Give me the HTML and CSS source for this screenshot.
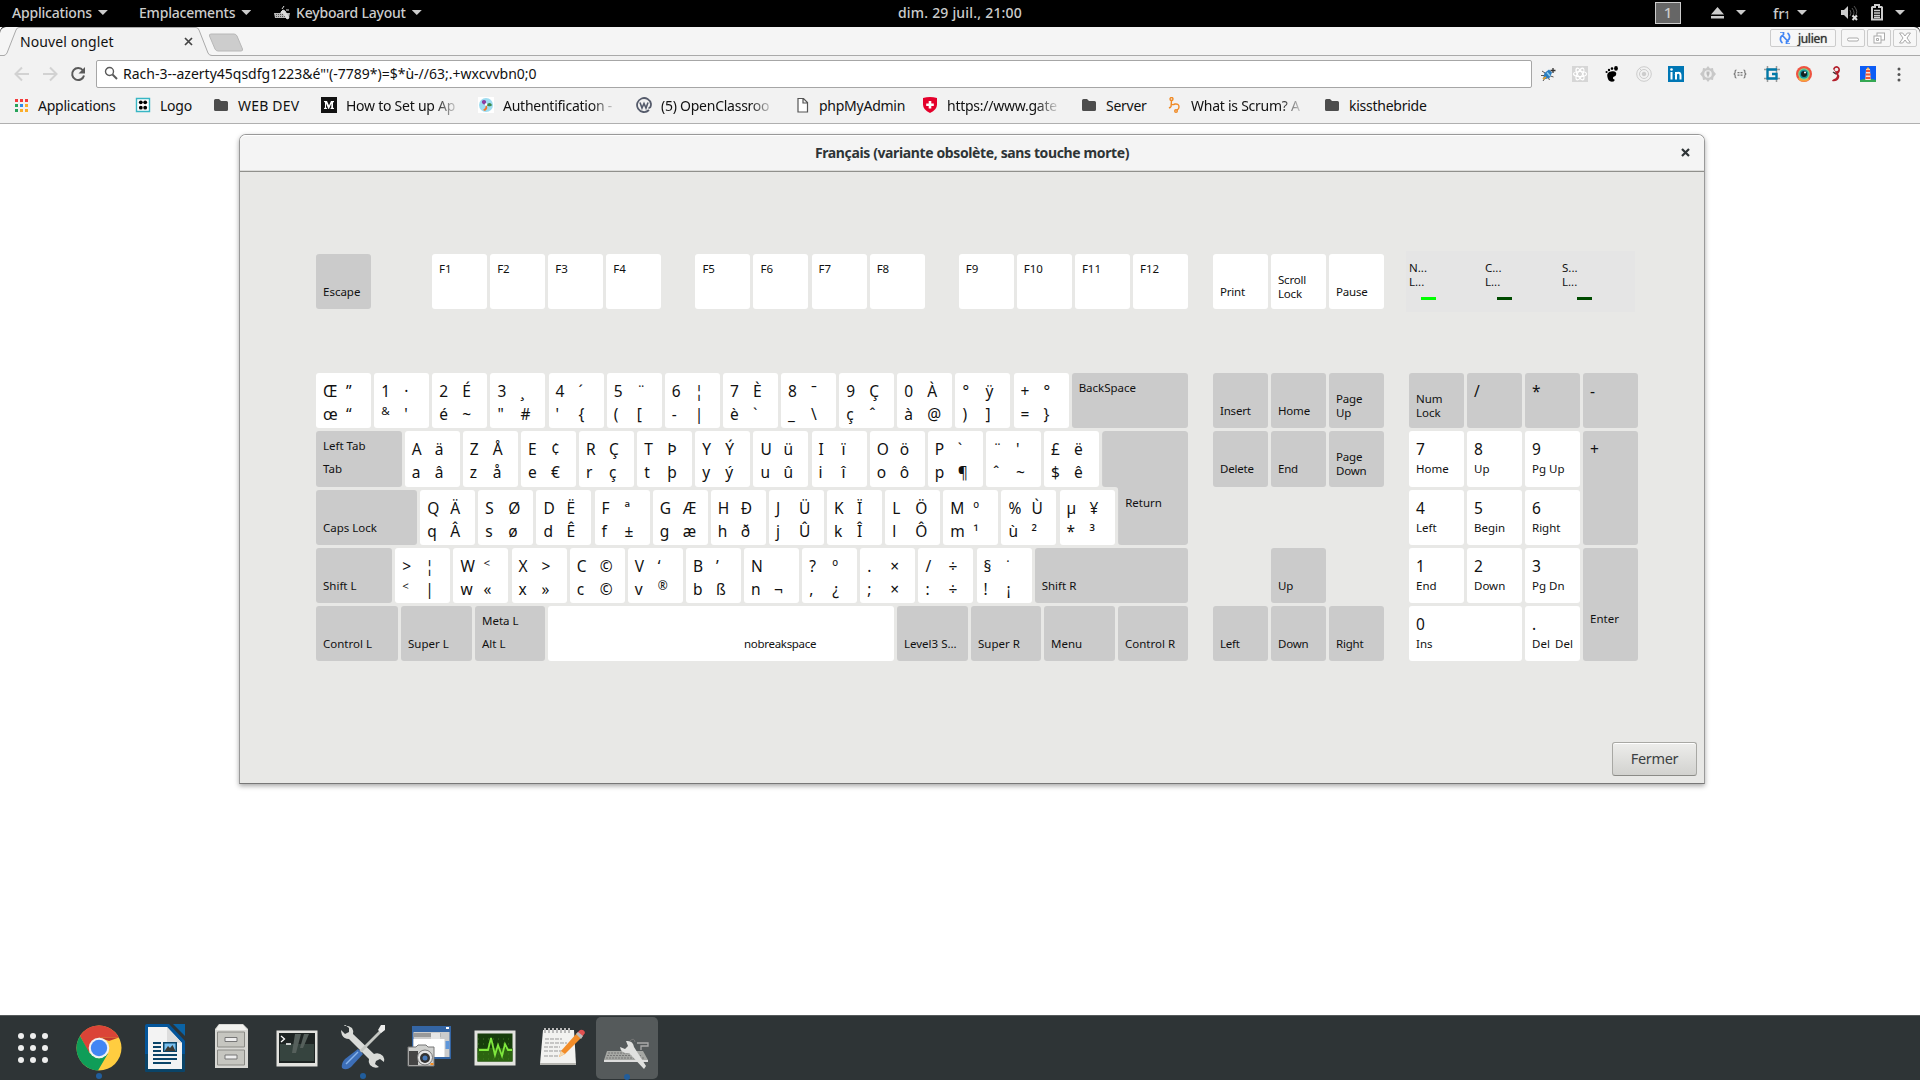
FILE: index.html
```html
<!DOCTYPE html>
<html lang="fr">
<head>
<meta charset="utf-8">
<title>Keyboard Layout</title>
<link rel="stylesheet" href="styles.css">
</head>
<body>
<header class="panel">
  <nav class="panel-side">
    <span class="menu m-apps"><span>Applications</span><b class="caret"></b></span>
    <span class="menu m-places"><span>Emplacements</span><b class="caret"></b></span>
    <span class="menu m-kbd"><svg width="16" height="14" viewBox="0 0 16 14"><path d="M0 7h16l-1 5H1z" fill="#bbb"/><path d="M2 8.500h11M2 10.500h10" stroke="#555" stroke-dasharray="1 1"/><path d="M7 6l2-2 2 1 4 7-2 1-4-6-2 0zM8 3l2-3M12 4h3" stroke="#ddd" fill="#ddd"/></svg><span>Keyboard Layout</span><b class="caret"></b></span>
  </nav>
  <span class="clock">dim. 29 juil., 21:00</span>
  <div class="panel-side status">
    <span class="workspace">1</span>
    <svg class="eject" width="13" height="12" viewBox="0 0 13 12" fill="#ccc"><path d="M6.500 0L13 7.500H0zM0 9h13v2.500H0z"/></svg>
    <b class="caret c-eject"></b>
    <span class="lang">fr<small>1</small></span><b class="caret c-lang"></b>
    <svg class="volume" width="17" height="16" viewBox="0 0 17 16"><path d="M0 5h3l4-4v13l-4-4H0z" fill="#ccc"/><path d="M9 5q2 3 0 6M11 3q4 5 0 9M13 1q5 6 1 10" fill="none" stroke="#555"/><path d="M11.500 10.500l4.500 4.500m0-4.500l-4.500 4.500" stroke="#ddd" stroke-width="2"/></svg>
    <svg class="battery" width="12" height="17" viewBox="0 0 12 17"><path d="M4 1h4v2h2.500l.5.5v12H1V3.500L1.500 3H4z" fill="none" stroke="#ccc" stroke-width="2"/><path d="M3 6.500h6M3 9h6M3 11.500h6M3 13.500h6" stroke="#ccc" stroke-width="1.300"/></svg>
    <b class="caret"></b>
  </div>
</header>

<div class="tabstrip">
  <svg class="tab-shape" width="250" height="29" viewBox="0 0 250 29"><path d="M0 28.500H4Q6 28 7 26L16 3Q17 .5 19 .5H196Q198 .5 199 3L208 26Q209 28.500 212 28.500H250V30H0z" fill="#f2f2f2"/><path d="M0 28.500H4Q6 28 7 26L16 3Q17 .5 19 .5H196Q198 .5 199 3L208 26Q209 28.500 212 28.500H250" fill="none" stroke="#aaa"/><path d="M211 7h23q2 0 3 2l5.500 13q.5 2-1.500 2h-23q-2 0-3-2l-5.500-13q-.5-2 1.500-2z" fill="#cdcdcd" stroke="#b8b8b8"/></svg>
  <span class="tab-title">Nouvel onglet</span>
  <svg class="tab-close" width="9" height="9" viewBox="0 0 9 9"><path d="M1 1l7 7M8 1L1 8" stroke="#444" stroke-width="1.700"/></svg>
  <div class="win-controls">
    <span class="user"><svg width="12" height="12" viewBox="0 0 12 12" fill="none" stroke="#4285f4" stroke-width="1.700"><path d="M1 0h3.500v3M4.500 3Q1 4 1.500 8q.5 2 2 3M11 12H7.500V9M7.500 9Q11 8 10.500 4q-.5-2-2-3M3 3l6.500 7"/></svg><span>julien</span></span>
    <span class="wc"><svg width="14" height="12" viewBox="0 0 14 12"><rect x="1.500" y="6" width="11" height="3" rx="1.500" fill="#fff" stroke="#aaa"/></svg></span>
    <span class="wc"><svg width="14" height="12" viewBox="0 0 14 12" fill="#fff" stroke="#aaa"><rect x="5" y="1" width="7.500" height="7"/><rect x="2" y="4" width="7" height="7"/><path d="M4.500 6.500h2v2h-2z"/></svg></span>
    <span class="wc"><svg width="14" height="12" viewBox="0 0 14 12"><path d="M1.500 1h3.200L7 4l2.300-3h3.200L9 6l3.500 5H9.300L7 8l-2.300 3H1.500L5 6z" fill="#fff" stroke="#aaa"/></svg></span>
  </div>
</div>

<div class="toolbar">
  <div class="nav-row">
    <div class="nav-buttons">
      <svg width="16" height="16" viewBox="0 0 16 16" fill="none" stroke="#d2d2d2" stroke-width="2"><path d="M15 8H2M8 1.500L1.500 8 8 14.500"/></svg>
      <svg width="16" height="16" viewBox="0 0 16 16" fill="none" stroke="#d2d2d2" stroke-width="2"><path d="M1 8h13M8 1.500L14.500 8 8 14.500"/></svg>
      <svg width="16" height="16" viewBox="0 0 16 16"><path d="M13 4.500A6 6 0 1 0 14 9.500" fill="none" stroke="#5a5a5a" stroke-width="2"/><path d="M15 1v6.500H8.500z" fill="#5a5a5a"/></svg>
    </div>
    <div class="omnibox"><svg width="14" height="14" viewBox="0 0 14 14" fill="none" stroke="#5a5a5a"><circle cx="5.500" cy="5.500" r="4" stroke-width="1.400"/><path d="M8.500 8.500l4.500 4.500" stroke-width="2"/></svg><span>Rach-3--azerty45qsdfg1223&amp;é"'(-7789*)=$*ù-//63;.+wxcvvbn0;0</span></div>
    <div class="extensions">
      <svg viewBox="0 0 16 16"><path d="M3 13L4.500 7 9 3.500l3 3-2 5-4 1.500z" fill="#2b7dc0"/><path d="M2 5l3 2M1 9.500h3M3 15l2-3M9.500 14l-1-2M13.500 11l-3-1" stroke="#555"/><path d="M13 2v5M10.500 4.500h5" stroke="#333" stroke-width="1.300"/><path d="M7 6.500l3 3.500" stroke="#8fd0f0" stroke-width="1.500"/><path d="M3 13l3-2" stroke="#e0a030" stroke-width="2"/></svg>
      <svg viewBox="0 0 16 16"><path d="M0 0h16v16H0z" fill="#d6d6d6"/><g fill="none" stroke="#fff" stroke-width="1.200"><ellipse cx="8" cy="8" rx="6.500" ry="2.500"/><ellipse cx="8" cy="8" rx="6.500" ry="2.500" transform="rotate(60 8 8)"/><ellipse cx="8" cy="8" rx="6.500" ry="2.500" transform="rotate(120 8 8)"/></g></svg>
      <svg viewBox="0 0 16 16"><path d="M7 5.500c4-1 6 .5 5 3.500-.5 2-3 1-3 3s2 .5 1.500 2.500C9.500 16.500 5 16 4 13 2.500 9 3 6.500 7 5.500z"/><ellipse cx="12" cy="2.400" rx="1.900" ry="2.300"/><circle cx="8" cy="2.600" r="1.300"/><circle cx="5" cy="4" r="1.200"/><circle cx="2.600" cy="6" r="1.100"/></svg>
      <svg viewBox="0 0 16 16" fill="none" stroke="#ccc"><circle cx="8" cy="8" r="7.300"/><circle cx="8" cy="8" r="4.500"/><circle cx="8" cy="8" r="1.800" fill="#ccc"/><path d="M3 2l3 3"/></svg>
      <svg viewBox="0 0 16 16"><path d="M0 0h16v16H0z" fill="#0077b5"/><path d="M3.500 6v7.500M8 6v7.500M7.500 9q1-2.500 3-2.200 2 .2 2 2.700v4" fill="none" stroke="#fff" stroke-width="2"/><circle cx="3.500" cy="3.500" r="1.300" fill="#fff"/></svg>
      <svg viewBox="0 0 16 16"><path d="M8 0l2 2.500 3-.5.500 3L16 8l-2.500 3-.500 3-3-.500L8 16l-2-2.500-3 .500-.500-3L0 8l2.500-3L3 2l3 .500z" fill="#c8c8c8"/><circle cx="8" cy="8" r="3.800" fill="#eee"/><path d="M6.500 5.500h3V8L8 11.500 6.500 8z" fill="#bbb"/></svg>
      <svg viewBox="0 0 16 16" fill="none" stroke="#777" stroke-width="1.200"><path d="M4.500 4Q2.800 4 3.200 6 3.300 7.800 1.700 8q1.600.2 1.500 2Q2.800 12 4.500 12M11.500 4q1.700 0 1.300 2-.1 1.800 1.500 2-1.600.2-1.500 2 .4 2-1.300 2M5.500 6.700h2M8.500 6.700h2M5.500 9.200h2M8.500 9.200h2"/></svg>
      <svg viewBox="0 0 16 16" fill="none"><path d="M0 3.500h16M0 12.500h16M3.500 0v16M12.500 0v16" stroke="#999" stroke-width="1.500"/><path d="M13 3.500H3.500v9h9V8H8" stroke="#0079a8" stroke-width="2.300"/></svg>
      <svg viewBox="0 0 16 16"><circle cx="8" cy="8" r="8" fill="#ef5340"/><path d="M13 14A8 8 0 0 1 2 13l3-4h6z" fill="#f7a13b"/><circle cx="8" cy="8" r="5.800" fill="#7dd88c"/><circle cx="8" cy="8" r="4.500" fill="#1896a0"/><circle cx="8" cy="8" r="3" fill="#122"/><circle cx="9" cy="6.500" r="1" fill="#fff"/></svg>
      <svg viewBox="0 0 16 16"><path d="M5 3q1-3 4-3 3 1 3 4 0 2-2 4 2 1 1 4-2 4-7 3 0-1 2-2 3-1 3-4-3-1-4-3l3 .500z" fill="#b3202c"/><circle cx="8.500" cy="3.500" r="1.800" fill="#eee"/><path d="M5 6l3 2" stroke="#444" stroke-width="1.500"/></svg>
      <svg viewBox="0 0 16 16"><path d="M0 0h16v16H0z" fill="#0c5cf5"/><path d="M0 14q8-2.500 16 0v2H0z" fill="#35a853"/><path d="M6 3h4l.7 11H5.300z" fill="#fbe3d3"/><path d="M6 5h4M5.600 8.500h5M5.500 12h5" stroke="#ee5533" stroke-width="2"/><path d="M6 3.500L8 1l2 2.500z" fill="#ffb64d"/></svg>
      <svg class="more" viewBox="0 0 16 16" fill="#555"><circle cx="8" cy="3" r="1.500"/><circle cx="8" cy="8.500" r="1.500"/><circle cx="8" cy="14" r="1.500"/></svg>
    </div>
  </div>
  <div class="bookmarks">
    <span class="bm"><svg viewBox="0 0 16 16"><path d="M2 2h3v3H2zM7 2h3v3H7zM12 2h3v3h-3z" fill="#f33b3b"/><path d="M2 7h3v3H2zM2 12h3v3H2z" fill="#27a35a"/><path d="M7 7h3v3H7z" fill="#2f8bea"/><path d="M12 7h3v3h-3zM7 12h3v3H7zM12 12h3v3h-3z" fill="#fbae2b"/></svg><span>Applications</span></span>
    <span class="bm"><svg viewBox="0 0 16 16"><path d="M1.500 1.500h13v13h-13z" fill="#fff" stroke="#38b6c4" stroke-width="1.400"/><g><circle cx="5.800" cy="5.300" r="1.900"/><circle cx="10.200" cy="5.300" r="1.900"/><circle cx="5.800" cy="10.700" r="1.900"/><circle cx="10.200" cy="10.700" r="1.900"/></g></svg><span>Logo</span></span>
    <span class="bm"><svg viewBox="0 0 16 16"><path d="M1 3.500Q1 2 2.500 2H6l2 2h5.500Q15 4 15 5.500v7q0 1.500-1.500 1.500h-11Q1 14 1 12.500z" fill="#4d4d4d"/></svg><span>WEB DEV</span></span>
    <span class="bm"><svg viewBox="0 0 16 16"><path d="M0 0h16v16H0z" fill="#121212"/><path d="M3 4h3l2 4.500L10 4h3v1l-1 .6v5l1 .6v.8H9.500v-.8l.8-.6V6.500L8 12h-.6L5 6.500v4l1.200.9v.6H3v-.7l1-.9V5.600L3 4.700z" fill="#fff"/></svg><span class="fade">How to Set up Ap</span></span>
    <span class="bm"><svg viewBox="0 0 16 16"><path d="M0 0h16v16H0z" fill="#fff"/><circle cx="8" cy="8" r="7" fill="#9edcf0"/><path d="M8 8q-5-1-4-4 2-2 4 0z" fill="#8b3fa0"/><path d="M8 8q4-4 6 0-1 2-4 1z" fill="#3a8a4a"/><path d="M8 8q3 3-1 6l-2-1q3-2 3-5z" fill="#f07828"/><circle cx="8" cy="7.500" r="1.300" fill="#fff"/></svg><span class="fade">Authentification -</span></span>
    <span class="bm"><svg viewBox="0 0 16 16" fill="none" stroke="#555b6b" stroke-width="1.800"><path d="M13 13A7 7 0 1 1 15 7q0 4-2.500 4"/><path d="M4 5.500l2 5.500 2-4.500 2 4.500 2-5.500" stroke-width="1.600"/></svg><span class="fade">(5) OpenClassroo</span></span>
    <span class="bm"><svg viewBox="0 0 16 16"><path d="M4 1.500h5.500L13.500 5.500v9.500H4zM9 1.500v4.500h4.500" fill="#fff" stroke="#555" stroke-width="1.200"/></svg><span>phpMyAdmin</span></span>
    <span class="bm"><svg viewBox="0 0 16 16"><path d="M1 1q3.500-1 7-1t7 1v6.500Q15 13 8 16 1 13 1 7.500z" fill="#e4002b"/><path d="M8 4v7.500M4.200 7.700h7.600" stroke="#fff" stroke-width="2.600"/></svg><span class="fade">https://www.gate</span></span>
    <span class="bm"><svg viewBox="0 0 16 16"><path d="M1 3.500Q1 2 2.500 2H6l2 2h5.500Q15 4 15 5.500v7q0 1.500-1.500 1.500h-11Q1 14 1 12.500z" fill="#4d4d4d"/></svg><span>Server</span></span>
    <span class="bm"><svg viewBox="0 0 16 16" fill="none" stroke="#f08a24" stroke-width="1.400"><circle cx="5.500" cy="2" r="1.500"/><path d="M5.500 3.500L5 10M5 6.500q1 2 4 .5 4-.5 4 3 0 2-2 3M3 11l2-1"/><circle cx="10" cy="14" r="1.300"/></svg><span class="fade">What is Scrum? A</span></span>
    <span class="bm"><svg viewBox="0 0 16 16"><path d="M1 3.500Q1 2 2.500 2H6l2 2h5.500Q15 4 15 5.500v7q0 1.500-1.500 1.500h-11Q1 14 1 12.500z" fill="#4d4d4d"/></svg><span>kissthebride</span></span>
  </div>
</div>

<main class="desktop">
  <section class="dialog">
    <div class="titlebar"><span></span><h1>Français (variante obsolète, sans touche morte)</h1><svg width="9" height="9" viewBox="0 0 9 9"><path d="M1 1l7 7M8 1L1 8" stroke="#2e3436" stroke-width="2.200"/></svg></div>
    <div class="board">
      <div class="deck">
        <div class="block main frow">
          <div class="key mod"><u></u><s>Escape</s></div>
          <div class="fgroup"><div class="key"><s>F1</s></div><div class="key"><s>F2</s></div><div class="key"><s>F3</s></div><div class="key"><s>F4</s></div></div>
          <div class="fgroup"><div class="key"><s>F5</s></div><div class="key"><s>F6</s></div><div class="key"><s>F7</s></div><div class="key"><s>F8</s></div></div>
          <div class="fgroup"><div class="key"><s>F9</s></div><div class="key"><s>F10</s></div><div class="key"><s>F11</s></div><div class="key"><s>F12</s></div></div>
        </div>
        <div class="block nav one">
          <div class="key n"><u></u><s>Print</s></div><div class="key n two"><s>Scroll<br>Lock</s></div><div class="key n"><u></u><s>Pause</s></div>
        </div>
        <div class="leds">
          <div class="led on"><span>N...<br>L...</span><b></b></div>
          <div class="led"><span>C...<br>L...</span><b></b></div>
          <div class="led last"><span>S...<br>L...</span><b></b></div>
        </div>
      </div>

      <div class="deck">
        <div class="block main rows">
          <div class="row">
            <div class="key"><i>Œ</i><i>”</i><i>œ</i><i>“</i></div>
            <div class="key"><i>1</i><i>·</i><s>&amp;</s><i>'</i></div>
            <div class="key"><i>2</i><i>É</i><i>é</i><i>~</i></div>
            <div class="key"><i>3</i><i>¸</i><i>"</i><i>#</i></div>
            <div class="key"><i>4</i><i>´</i><i>'</i><i>{</i></div>
            <div class="key"><i>5</i><i>¨</i><i>(</i><i>[</i></div>
            <div class="key"><i>6</i><i>¦</i><i>-</i><i>|</i></div>
            <div class="key"><i>7</i><i>È</i><i>è</i><i>`</i></div>
            <div class="key"><i>8</i><i>ˉ</i><i>_</i><i>\</i></div>
            <div class="key"><i>9</i><i>Ç</i><i>ç</i><i>ˆ</i></div>
            <div class="key"><i>0</i><i>À</i><i>à</i><i>@</i></div>
            <div class="key"><i>°</i><i>ÿ</i><i>)</i><i>]</i></div>
            <div class="key"><i>+</i><i>°</i><i>=</i><i>}</i></div>
            <div class="key mod fill"><s>BackSpace</s></div>
          </div>
          <div class="row tall">
            <div class="key mod k-tab"><s>Left Tab</s><s>Tab</s></div>
            <div class="key"><i>A</i><i>ä</i><i>a</i><i>â</i></div>
            <div class="key"><i>Z</i><i>Å</i><i>z</i><i>å</i></div>
            <div class="key"><i>E</i><i>¢</i><i>e</i><i>€</i></div>
            <div class="key"><i>R</i><i>Ç</i><i>r</i><i>ç</i></div>
            <div class="key"><i>T</i><i>Þ</i><i>t</i><i>þ</i></div>
            <div class="key"><i>Y</i><i>Ý</i><i>y</i><i>ý</i></div>
            <div class="key"><i>U</i><i>ü</i><i>u</i><i>û</i></div>
            <div class="key"><i>I</i><i>ï</i><i>i</i><i>î</i></div>
            <div class="key"><i>O</i><i>ö</i><i>o</i><i>ô</i></div>
            <div class="key"><i>P</i><i>`</i><i>p</i><i>¶</i></div>
            <div class="key"><i>¨</i><i>'</i><i>ˆ</i><i>~</i></div>
            <div class="key"><i>£</i><i>ë</i><i>$</i><i>ê</i></div>
            <div class="key mod k-return"><s>Return</s></div>
          </div>
          <div class="row">
            <div class="key mod k-caps"><u></u><s>Caps Lock</s></div>
            <div class="key"><i>Q</i><i>Ä</i><i>q</i><i>Â</i></div>
            <div class="key"><i>S</i><i>Ø</i><i>s</i><i>ø</i></div>
            <div class="key"><i>D</i><i>Ë</i><i>d</i><i>Ê</i></div>
            <div class="key"><i>F</i><i>ª</i><i>f</i><i>±</i></div>
            <div class="key"><i>G</i><i>Æ</i><i>g</i><i>æ</i></div>
            <div class="key"><i>H</i><i>Ð</i><i>h</i><i>ð</i></div>
            <div class="key"><i>J</i><i>Ü</i><i>j</i><i>Û</i></div>
            <div class="key"><i>K</i><i>Ï</i><i>k</i><i>Î</i></div>
            <div class="key"><i>L</i><i>Ö</i><i>l</i><i>Ô</i></div>
            <div class="key"><i>M</i><i>º</i><i>m</i><i>¹</i></div>
            <div class="key"><i>%</i><i>Ù</i><i>ù</i><i>²</i></div>
            <div class="key"><i>µ</i><i>¥</i><i>*</i><i>³</i></div>
          </div>
          <div class="row">
            <div class="key mod k-shift"><u></u><s>Shift L</s></div>
            <div class="key"><i>&gt;</i><i>¦</i><s>&lt;</s><i>|</i></div>
            <div class="key"><i>W</i><s>&lt;</s><i>w</i><i>«</i></div>
            <div class="key"><i>X</i><i>&gt;</i><i>x</i><i>»</i></div>
            <div class="key"><i>C</i><i>©</i><i>c</i><i>©</i></div>
            <div class="key"><i>V</i><i>‘</i><i>v</i><i class="reg">®</i></div>
            <div class="key"><i>B</i><i>’</i><i>b</i><i>ß</i></div>
            <div class="key"><i>N</i><i></i><i>n</i><i>¬</i></div>
            <div class="key"><i>?</i><i>º</i><i>,</i><i>¿</i></div>
            <div class="key"><i>.</i><i>×</i><i>;</i><i>×</i></div>
            <div class="key"><i>/</i><i>÷</i><i>:</i><i>÷</i></div>
            <div class="key"><i>§</i><i>˙</i><i>!</i><i>¡</i></div>
            <div class="key mod fill"><u></u><s>Shift R</s></div>
          </div>
          <div class="row bottom">
            <div class="key mod"><u></u><s>Control L</s></div>
            <div class="key mod"><u></u><s>Super L</s></div>
            <div class="key mod"><s>Meta L</s><s>Alt L</s></div>
            <div class="key space"><u></u><s>nobreakspace</s></div>
            <div class="key mod"><u></u><s>Level3 S...</s></div>
            <div class="key mod"><u></u><s>Super R</s></div>
            <div class="key mod"><u></u><s>Menu</s></div>
            <div class="key mod"><u></u><s>Control R</s></div>
          </div>
        </div>

        <div class="block nav">
          <div class="key mod"><u></u><s>Insert</s></div><div class="key mod"><u></u><s>Home</s></div><div class="key mod two"><s>Page<br>Up</s></div>
          <div class="key mod"><u></u><s>Delete</s></div><div class="key mod"><u></u><s>End</s></div><div class="key mod two"><s>Page<br>Down</s></div>
          <div class="key mod k-up"><u></u><s>Up</s></div>
          <div class="key mod k-left"><u></u><s>Left</s></div><div class="key mod k-down"><u></u><s>Down</s></div><div class="key mod k-right"><u></u><s>Right</s></div>
        </div>

        <div class="block numpad">
          <div class="key mod two"><s>Num<br>Lock</s></div><div class="key mod"><i>/</i></div><div class="key mod"><i>*</i></div><div class="key mod"><i>-</i></div>
          <div class="key n"><i>7</i><s>Home</s></div><div class="key n"><i>8</i><s>Up</s></div><div class="key n"><i>9</i><s>Pg Up</s></div><div class="key mod v2"><i>+</i></div>
          <div class="key n"><i>4</i><s>Left</s></div><div class="key n"><i>5</i><s>Begin</s></div><div class="key n"><i>6</i><s>Right</s></div>
          <div class="key n"><i>1</i><s>End</s></div><div class="key n"><i>2</i><s>Down</s></div><div class="key n"><i>3</i><s>Pg Dn</s></div><div class="key mod v2 k-enter"><s>Enter</s></div>
          <div class="key n h2"><i>0</i><s>Ins</s></div><div class="key n del"><i>.</i><i></i><s>Del</s><s>Del</s></div>
        </div>
      </div>
    </div>
    <div class="actions"><button>Fermer</button></div>
  </section>
</main>

<footer class="dock">
  <div class="app"><svg viewBox="0 0 48 48" fill="#eee"><circle cx="12" cy="12" r="3"/><circle cx="24" cy="12" r="3"/><circle cx="36" cy="12" r="3"/><circle cx="12" cy="24" r="3"/><circle cx="24" cy="24" r="3"/><circle cx="36" cy="24" r="3"/><circle cx="12" cy="36" r="3"/><circle cx="24" cy="36" r="3"/><circle cx="36" cy="36" r="3"/></svg></div>
  <div class="app running"><svg viewBox="0 0 48 48"><circle cx="24" cy="24" r="22.500" fill="#ffcd40"/><path d="M24 13.500H43.900A22.500 22.500 0 0 0 5 12L14 29z" fill="#db4437"/><path d="M5 12A22.500 22.500 0 0 0 23 46.500L33 29.500 24 34.500 14.500 29z" fill="#0f9d58"/><path d="M24 13.500H43.900L34 17z" fill="#c23a2e"/><circle cx="24" cy="24" r="10.300" fill="#f1f1f1"/><circle cx="24" cy="24" r="8.200" fill="#4285f4"/></svg></div>
  <div class="app"><svg viewBox="0 0 48 48"><path d="M6 0H28L44 17V46q0 2-2 2H6q-2 0-2-2V2q0-2 2-2z" fill="#04559a"/><path d="M4 30v16q0 2 2 2h36q2 0 2-2V30z" fill="#0a4468"/><path d="M32 0h12v12z" fill="#0b63a5"/><path d="M7 3H26L41 19V45H7z" fill="#f3f3f3"/><path d="M26 3v16h15z" fill="#ddd"/><path d="M12 19h8M12 23h8M12 27h8M12 31h24M12 35h24M12 39h18" stroke="#0a4468" stroke-width="2"/><path d="M22 18h14v10H22z" fill="#0a4468"/><path d="M23.500 19.500h11V27h-11z" fill="#7ac0ef"/><path d="M23.500 27l3.500-5 2 2 2.500-3 3 6z" fill="#3d3a33"/></svg></div>
  <div class="app"><svg viewBox="0 0 48 48"><path d="M12 0h24l5 5v39H8V5z" fill="#d8d8d4"/><path d="M12 1h24l4 5H9z" fill="#f2f2ef"/><path d="M10.500 8h27v15h-27zM10.500 26h27v15h-27z" fill="#c6c6c0" stroke="#8a8a85"/><path d="M18 13.500h12v4H18zM18 31h12v4H18z" fill="#eee" stroke="#777"/></svg></div>
  <div class="app"><svg viewBox="0 0 48 48"><path d="M3.500 6.500h41v36h-41z" fill="#e3e3df"/><path d="M6 9h36v30H6z" fill="#1e2423"/><path d="M7 20h34v17H7z" fill="#36443f"/><path d="M22 10h6l-5 19h-4zM31 10h5l-6 14h-3z" fill="#56605c"/><path d="M8 12l3.500 3L8 18M13 20h5" fill="none" stroke="#fff" stroke-width="1.300"/></svg></div>
  <div class="app running"><svg viewBox="0 0 48 48"><path d="M3 4l2-2q4-1 8 2 2 3 1 6l21 20q5-2 9 2 2 3 1 6l-4-3-4 2-1 3 4 3q-5 2-9-2-2-3-1-6L10 15Q5 15 3 11 2 8 2 6l4 4 4-2V4L6 1z" fill="#d9dbd8"/><path d="M42 5l2 2-22 22-2-2z" fill="#c4c7c3"/><path d="M42 1h4v5l-4 3-3-3z" fill="#ececec"/><path d="M19 25l5 5L12 43q-5 4-9 1-1-5 3-9z" fill="#3d6fb8"/><path d="M19 28L7 40" stroke="#88b4ea" stroke-width="1.500"/></svg></div>
  <div class="app"><svg viewBox="0 0 48 48"><path d="M7 2h39v33H7z" fill="#3465a4"/><path d="M8.500 8h36v25h-36z" fill="#ccc"/><path d="M8.500 9h27v4h-27z" fill="#999"/><path d="M8.500 15h31v18h-31z" fill="#fff"/><path d="M26 9h9v6h-9z" fill="#e6e6e6"/><path d="M40.500 17h4v8h-4z" fill="#5f97da"/><path d="M41 4h3" stroke="#fff" stroke-width="2"/><path d="M3 23h8l2-2h8l2 2h6v19H3z" fill="#cfd0ce" stroke="#777"/><path d="M4 27h9v14H4z" fill="#454545"/><circle cx="20" cy="33.500" r="7.500" fill="#e6e6e6" stroke="#777"/><circle cx="20" cy="34" r="5" fill="#333"/><circle cx="20" cy="34" r="2.500" fill="#4578b8"/><path d="M25.500 39h3v2h-3z" fill="#f58a1f"/></svg></div>
  <div class="app"><svg viewBox="0 0 48 48"><path d="M3.500 6.500h41v35h-41z" fill="#e3e3df"/><path d="M6.500 9.500h35v28h-35z" fill="#173d0b"/><path d="M6.500 24h35v13.500h-35z" fill="#2c6410"/><path d="M7 15h34M7 20h34M7 30h34M7 35h34" stroke="#3f7a20" stroke-dasharray="1 4"/><path d="M8 26h9l3-12 4 17 3-10 4 11 3-12 3 6h4" fill="none" stroke="#7fe83d" stroke-width="1.800"/></svg></div>
  <div class="app"><svg viewBox="0 0 48 48"><path d="M6 6h31l2 34H3z" fill="#f2f2f0"/><path d="M3 39h36v2H3z" fill="#b5b5b0"/><path d="M8 4v5M12 4v5M16 4v5M20 4v5M24 4v5M28 4v5M32 4v5" stroke="#bbb" stroke-width="2"/><path d="M8 15h17M8 19h22M7 23h16M7 27h18M7 32h14" stroke="#999" stroke-dasharray="4 1"/><path d="M22 33l2-6L40 9l5 4-17 17z" fill="#f28c28"/><path d="M40 9l3-3q4-1 5 3l-3 4z" fill="#e05050"/><path d="M39 10l2-2 5 4-2 3z" fill="#bbb"/><path d="M22 33l2-6 4 3z" fill="#f3d9b0"/></svg></div>
  <div class="app running active"><svg viewBox="0 0 48 48"><path d="M4 27h36l5 9H1z" fill="#a5a7a3"/><path d="M1 36h44v2H1z" fill="#ddd"/><path d="M5 29h30M4 31.500h34M3 34h38" stroke="#777" stroke-dasharray="2 1"/><path d="M38 26v-4h7v-3H34" fill="none" stroke="#aaa" stroke-width="1.300"/><path d="M17 23l5 2 3-3-2-5q7-1 8 6l12 19-2 3-15-16q-8 1-9-6z" fill="#e0e1df"/><path d="M27 17q4-4 5 1" stroke="#777" fill="none"/></svg></div>
</footer>
</body>
</html>
```
FILE: styles.css
```css
* { box-sizing: border-box; }

body {
  margin: 0;
  width: 1920px;
  height: 1080px;
  overflow: hidden;
  display: flex;
  flex-direction: column;
  background: #fff;
  font-family: "Noto Sans", "Open Sans", sans-serif;
  font-size: 14px;
  color: #111;
}

svg { display: block; flex: none; }

/* Top panel */
.panel {
  height: 27px;
  flex: none;
  background: #000;
  color: #ccc;
  display: grid;
  grid-template-columns: 1fr auto 1fr;
  align-items: center;
  padding-bottom: 2px;
  font-weight: 500;
  letter-spacing: -.2px;
}
.panel-side { display: flex; align-items: center; }
.menu { display: flex; align-items: center; }
.m-apps { width: 127px; margin-left: 12px; }
.m-places { width: 135px; }
.menu .caret { margin-left: 6px; }
.m-kbd svg { margin-right: 6px; }
.caret { width: 10px; height: 5px; background: #ccc; clip-path: polygon(0 0, 100% 0, 50% 100%); }
.clock { white-space: nowrap; letter-spacing: .2px; }
.status { justify-content: flex-end; padding-right: 15px; }
.workspace {
  width: 26px; height: 22px;
  background: #666; border: 1px solid #ccc;
  text-align: center; line-height: 19px; font-size: 15px;
  margin: 1px 30px 0 0;
}
.eject { margin-right: 12px; }
.c-eject { margin-right: 27px; }
.lang { width: 18px; margin-right: 6px; white-space: nowrap; font-size: 15px; }
.lang small { font-size: 10px; }
.c-lang { margin-right: 34px; }
.volume { margin-right: 13px; }
.battery { margin-right: 12px; }

/* Browser tabs */
.tabstrip {
  height: 29px;
  flex: none;
  position: relative;
  display: flex;
  align-items: center;
  background: #f5f5f5;
  border-bottom: 1px solid #aaa;
  box-shadow: 0 -1px #000;
  border-radius: 6px 6px 0 0;
}
.tab-shape { position: absolute; left: 0; top: 0; }
.tab-title { position: relative; width: 164px; margin-left: 20px; letter-spacing: .1px; }
.tab-close { position: relative; }
.win-controls { margin-left: auto; display: flex; gap: 2px; margin-right: 3px; margin-top: -6px; }
.win-controls > span {
  height: 18px; border: 1px solid #ccc; border-radius: 2px; background: #f7f7f7;
  display: flex; align-items: center; justify-content: center;
}
.wc { width: 24px; }
.win-controls .user { width: 66px; margin-right: 3px; gap: 7px; font-size: 12px; letter-spacing: -.3px; color: #333; text-shadow: 0 0 1px #555; }

/* Toolbar */
.toolbar { height: 68px; flex: none; background: #f2f2f2; border-bottom: 1px solid #b0b0b0; }
.nav-row { height: 36px; display: flex; align-items: center; }
.nav-buttons { width: 96px; padding-left: 14px; display: flex; gap: 12px; }
.omnibox {
  width: 1436px; height: 28px;
  border: 1px solid #a6a6a6; border-radius: 2px; background: #fff;
  display: flex; align-items: center; padding: 0 0 2px 7px; gap: 5px;
  font-size: 14px; white-space: nowrap;
}
.extensions { display: flex; gap: 16px; margin-left: 8px; }
.extensions svg { width: 16px; height: 16px; }
.extensions .more { margin-left: -1px; }

.bookmarks { height: 28px; display: flex; align-items: center; padding: 0 0 2px 13px; letter-spacing: -.25px; }
.bm { display: flex; align-items: center; gap: 9px; white-space: nowrap; flex: none; }
.bm svg { width: 16px; height: 16px; }
.bm:nth-child(1) { width: 122px; }
.bm:nth-child(2) { width: 78px; }
.bm:nth-child(3) { width: 108px; letter-spacing: .2px; }
.bm:nth-child(4) { width: 157px; }
.bm:nth-child(5) { width: 158px; }
.bm:nth-child(6) { width: 158px; }
.bm:nth-child(7) { width: 128px; }
.bm:nth-child(8) { width: 159px; }
.bm:nth-child(9) { width: 85px; }
.bm:nth-child(10) { width: 158px; }
.fade { width: 114px; overflow: hidden; mask-image: linear-gradient(90deg, #000 78%, transparent); }

/* Keyboard window */
.desktop { flex: 1; background: #fff; padding: 10px 0 0 239px; }
.dialog {
  width: 1466px; height: 650px;
  border: 1px solid #999; border-bottom-color: #777;
  border-radius: 7px 7px 0 0;
  background: #e8e8e6;
  box-shadow: 0 2px 5px rgba(0,0,0,.35);
  display: flex; flex-direction: column;
}
.titlebar {
  height: 37px; flex: none;
  display: grid; grid-template-columns: 9px 1fr 9px; align-items: center;
  padding: 0 14px 1px;
  background: #f4f4f4;
  border-bottom: 1px solid #90908c;
  box-shadow: inset 0 1px #fff, inset 0 -1px #dcdcda;
  border-radius: 6px 6px 0 0;
}
.titlebar h1 { margin: 0; text-align: center; font-size: 14px; font-weight: 700; color: #2e3436; letter-spacing: -.38px; }
.board { padding: 82px 0 0 76px; flex: 1; display: flex; flex-direction: column; gap: 64px; }
.deck { display: flex; gap: 25px; align-items: flex-start; }
.main { width: 872px; }
.frow { display: flex; justify-content: space-between; }
.frow > .key { margin-right: 27px; }
.fgroup { display: flex; gap: 3.100px; }
.rows { display: flex; flex-direction: column; gap: 3px; }
.row { display: flex; gap: 3.140px; height: 55px; }
.row.tall { height: 56px; }

/* A key holds up to four legends: upper and lower line, two columns */
.key {
  width: 55px; height: 55px; flex: none;
  background: #fff; border-radius: 3px;
  display: grid; grid-template-columns: 23px 1fr; grid-template-rows: 23px 23px;
  padding: 6px 0 0 7px;
  align-content: start;
  white-space: nowrap;
}
.tall > .key { height: 56px; }
.key i { font-style: normal; font-size: 15.500px; line-height: 24px; }
.key s { text-decoration: none; font-size: 11.500px; line-height: 24px; margin-top: -3px; }
.key .reg { font-size: 12px; margin-top: -3px; }
.mod { background: #cbcbcb; }
.key.mod, .key.n { grid-template-columns: 1fr; }
.key.n.del { grid-template-columns: 23px 1fr; }
.two s { line-height: 14px; margin-top: 13px; }
.fill { flex: 1; width: auto; }
.key.k-tab { width: 85.500px; }
.key.k-caps { width: 101px; }
.key.k-shift { width: 76.200px; }
.key.k-return {
  flex: 1; height: 114px; padding: 63px 0 0 23px;
  clip-path: path("M3 0H83Q86 0 86 3V111Q86 114 83 114H19Q16 114 16 111V59Q16 56 13 56H3Q0 56 0 53V3Q0 0 3 0Z");
}
.row.bottom { gap: 3px; }
.bottom .key:nth-child(1) { width: 82px; }
.bottom .key:nth-child(2) { width: 71px; }
.bottom .key:nth-child(3) { width: 70px; }
.bottom .key.space { width: 346px; grid-template-columns: 1fr; padding-left: 196px; letter-spacing: -.3px; }
.bottom .key:nth-child(5) { width: 71px; }
.bottom .key:nth-child(6) { width: 70px; }
.bottom .key:nth-child(7) { width: 71px; }
.bottom .key:nth-child(8) { width: 70px; }

.nav { display: grid; grid-template: 55px 56px 55px 55px 55px / 55px 55px 55px; gap: 3px; letter-spacing: -.2px; }
.nav.one { grid-template-rows: 55px; }
.nav .key, .numpad .key { height: auto; width: auto; }
.k-up { grid-area: 4 / 2; }
.k-left { grid-area: 5 / 1; }
.k-down { grid-area: 5 / 2; }
.k-right { grid-area: 5 / 3; }
.numpad { display: grid; grid-template: 55px 56px 55px 55px 55px / 55px 55px 55px 55px; gap: 3px; }
.v2 { grid-row: span 2; }
.h2 { grid-column: span 2; }
.key.k-enter { padding-top: 62px; }

.leds {
  width: 229px; height: 61px; margin: -3px 0 -3px -3px;
  background: #e5e5e5;
  display: grid; grid-template-columns: 76px 77px 1fr;
  padding: 10px 0 0 3px;
  font-size: 11.500px; line-height: 14px;
}
.led b { display: block; width: 15px; height: 3px; margin: 8px 0 0 12px; background: #004b00; }
.led.on b { background: #0f0; }
.led.last b { margin-left: 15px; }

.actions { padding: 0 7px 7px; display: flex; justify-content: flex-end; }
.actions button {
  width: 85px; height: 34px; margin: 0; padding: 0 0 2px;
  font: 14.500px "Noto Sans", sans-serif; letter-spacing: -.35px; color: #3c4143;
  border: 1px solid #a8a8a4; border-bottom-color: #8b8b87; border-radius: 3px;
  background: linear-gradient(#ededeb, #d2d2cf);
  box-shadow: inset 0 1px #fff;
}

/* Dock */
.dock { height: 65px; flex: none; background: #2e3436; border-top: 1px solid #555a5b; display: flex; }
.app { width: 66px; position: relative; display: flex; justify-content: center; padding-top: 8px; }
.app svg { width: 48px; height: 48px; }
.active { width: 62px; height: 62px; margin: 1px 2px 0; padding-top: 7px; background: #555a5b; border-radius: 5px; }
.running::after {
  content: ""; position: absolute; left: 50%; top: 57px;
  width: 6px; height: 6px; margin-left: -3px; border-radius: 50%; background: #215d9c;
}
```
